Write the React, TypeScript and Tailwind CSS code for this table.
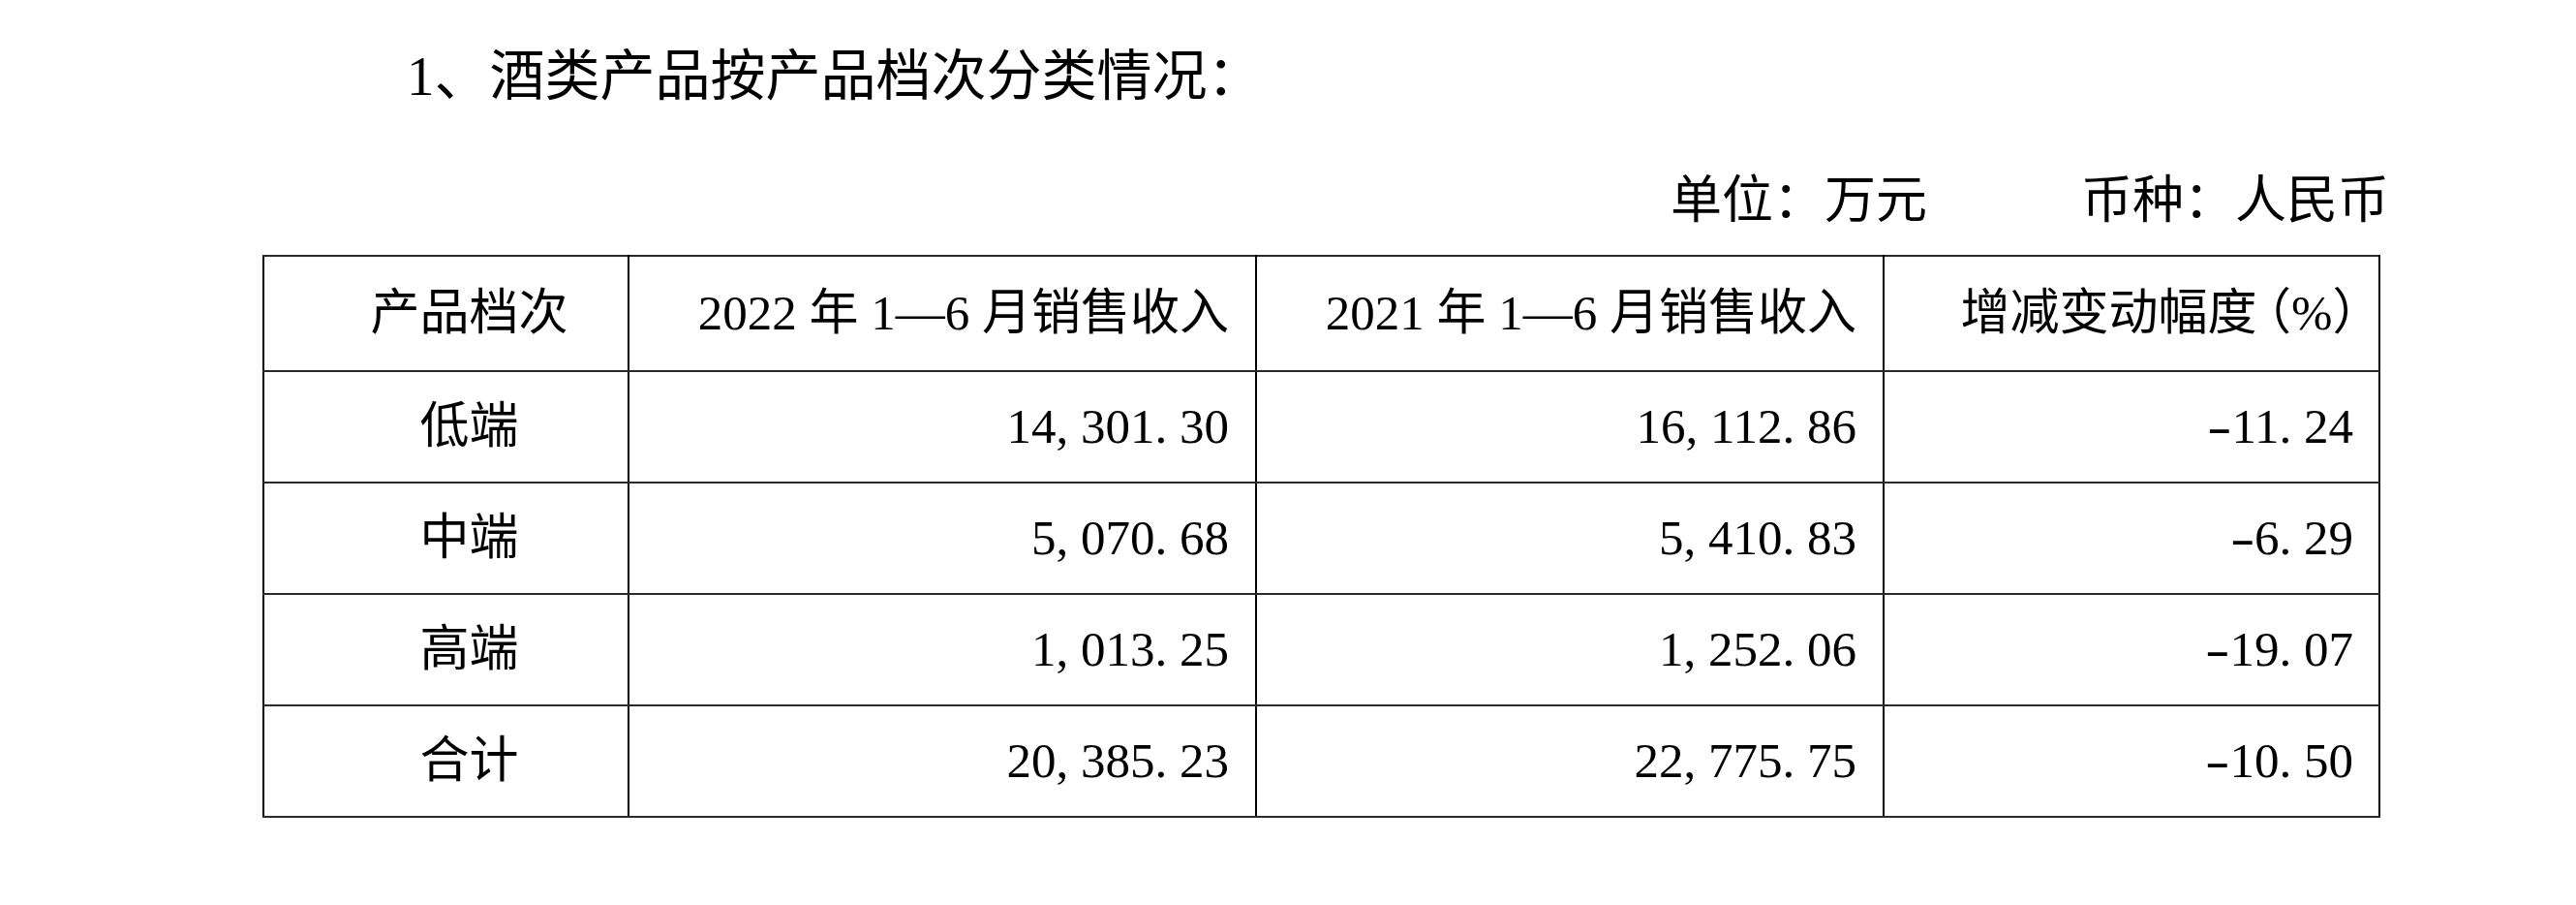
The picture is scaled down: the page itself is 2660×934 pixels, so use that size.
import React from 'react'

type Row = {
  grade: string
  current: string
  previous: string
  change: string
}

const rows: Row[] = [
  { grade: '低端', current: '14,301.30', previous: '16,112.86', change: '-11.24' },
  { grade: '中端', current: '5,070.68', previous: '5,410.83', change: '-6.29' },
  { grade: '高端', current: '1,013.25', previous: '1,252.06', change: '-19.07' },
  { grade: '合计', current: '20,385.23', previous: '22,775.75', change: '-10.50' },
]

// 宋体 style numbers: every char sits in a half-width cell
function Num({ value }: { value: string }) {
  return (
    <>
      {value.split('').map((ch, i) => {
        if (ch === '-')
          return (
            <span key={i} className="inline-block w-[0.5em] scale-x-[1.5] text-center">
              {ch}
            </span>
          )
        if (ch === ',' || ch === '.')
          return (
            <span key={i} className="inline-block w-[0.5em] text-left">
              {ch}
            </span>
          )
        return <span key={i}>{ch}</span>
      })}
    </>
  )
}

const cell = 'border-x-2 border-y-2 border-x-black border-y-[#2a2a2a] p-0 align-middle'

export default function App() {
  return (
    <div className="h-[934px] w-[2660px] bg-white pt-[50px] text-black [font-family:'Liberation_Serif','Noto_Sans_CJK_SC',serif]">
      <div className="h-[57px] pl-[420px] text-[57px] leading-[57px]">1、酒类产品按产品档次分类情况：</div>

      <div className="mt-[74px] flex h-[53px] justify-end gap-[159px] pr-[193px] text-[53px] leading-[53px]">
        <span>单位：万元</span>
        <span>币种：人民币</span>
      </div>

      <table className="mt-[29px] ml-[271px] w-[2185px] table-fixed border-collapse text-[51px] leading-none">
        <colgroup>
          <col className="w-[377px]" />
          <col className="w-[648px]" />
          <col className="w-[648px]" />
          <col className="w-[512px]" />
        </colgroup>
        <thead>
          <tr className="h-[119px]">
            <th className={`${cell} pl-[48px] text-center font-normal`}>产品档次</th>
            <th className={`${cell} pr-[27px] text-right font-normal`}>2022 年 1—6 月销售收入</th>
            <th className={`${cell} pr-[27px] text-right font-normal`}>2021 年 1—6 月销售收入</th>
            <th className={`${cell} pr-[22px] text-right font-normal`}>
              增减变动幅度<span className="ml-[10px] [font-feature-settings:'halt']">（%）</span>
            </th>
          </tr>
        </thead>
        <tbody>
          {rows.map((row) => (
            <tr key={row.grade} className="h-[115px]">
              <td className={`${cell} pl-[48px] text-center`}>{row.grade}</td>
              <td className={`${cell} pr-[27px] text-right`}>
                <Num value={row.current} />
              </td>
              <td className={`${cell} pr-[27px] text-right`}>
                <Num value={row.previous} />
              </td>
              <td className={`${cell} pr-[26px] text-right`}>
                <Num value={row.change} />
              </td>
            </tr>
          ))}
        </tbody>
      </table>
    </div>
  )
}
